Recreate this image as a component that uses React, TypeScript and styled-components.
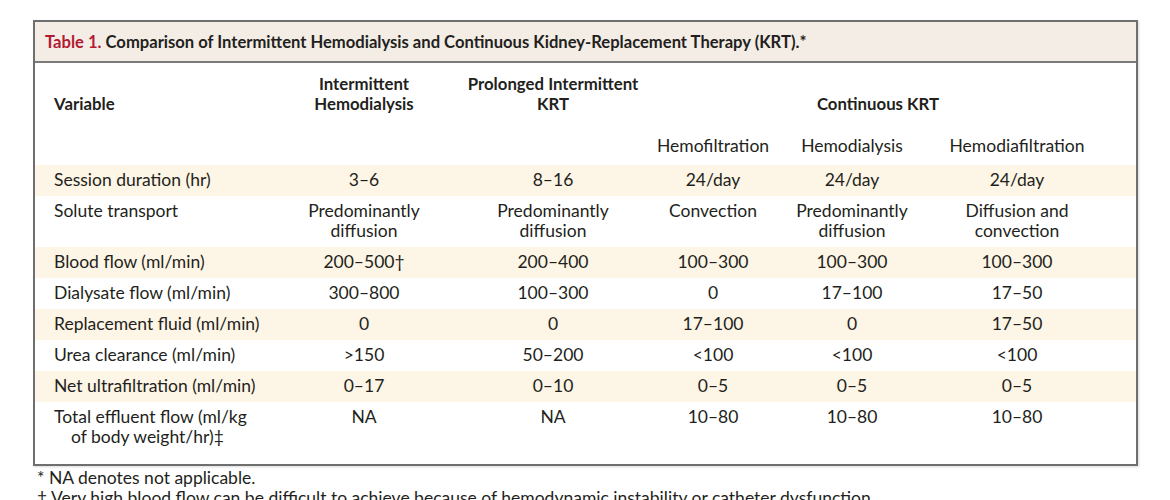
import React from "react";
import styled, { createGlobalStyle } from "styled-components";

const Global = createGlobalStyle`
  html, body { margin: 0; padding: 0; background: #ffffff; }
  body { font-family: Lato, "Open Sans", sans-serif; color: #231f20; }
`;

const COLS = "218px 184px 194px 126px 152px 178px";

const Page = styled.div`
  padding: 20px 32px 0 33px;
  width: 1105px;
`;

const Box = styled.div`
  border: 2px solid #6f6f6f;
  box-shadow: 1px 1px 2px rgba(0,0,0,0.15);
`;

const TitleBar = styled.div`
  background: #f4ede6;
  border-bottom: 2px solid #7a7a7a;
  height: 39px;
  display: flex;
  align-items: center;
  padding-left: 10px;
  font-weight: 700;
  font-size: 16.6px;
  color: #231f20;
  white-space: nowrap;
`;

const Red = styled.span`
  color: #b31b34;
  margin-right: 4px;
`;

const Grid = styled.div<{ $shade?: boolean; $pt?: number; $pb?: number; $align?: string }>`
  display: grid;
  grid-template-columns: ${COLS};
  padding: ${(p) => p.$pt ?? 5}px 0 ${(p) => p.$pb ?? 6}px 19px;
  background: ${(p) => (p.$shade ? "#fdf5e5" : "transparent")};
  align-items: ${(p) => p.$align ?? "start"};
  font-size: 17.5px;
  line-height: 20px;
`;

const Head = styled.div<{ $left?: boolean; $span?: number }>`
  font-weight: 700;
  font-size: 16.8px;
  text-align: ${(p) => (p.$left ? "left" : "center")};
  grid-column: span ${(p) => p.$span ?? 1};
  white-space: nowrap;
`;

const Sub = styled.div`
  text-align: center;
  font-weight: 400;
`;

const Label = styled.div<{ $hang?: boolean }>`
  text-align: left;
  white-space: nowrap;
  ${(p) => (p.$hang ? "padding-left: 17px; text-indent: -17px;" : "")}
`;

const Cell = styled.div`
  text-align: center;
  white-space: nowrap;
`;

const Notes = styled.div`
  padding: 2px 0 0 4px;
  font-size: 17.5px;
  line-height: 20px;
  color: #231f20;
  white-space: nowrap;
`;

type Row = { label: string; vals: string[]; hang?: boolean; pb?: number };

const rows: Row[] = [
  { label: "Session duration (hr)", vals: ["3–6", "8–16", "24/day", "24/day", "24/day"] },
  {
    label: "Solute transport",
    vals: [
      "Predominantly\ndiffusion",
      "Predominantly\ndiffusion",
      "Convection",
      "Predominantly\ndiffusion",
      "Diffusion and\nconvection",
    ],
  },
  { label: "Blood flow (ml/min)", vals: ["200–500†", "200–400", "100–300", "100–300", "100–300"] },
  { label: "Dialysate flow (ml/min)", vals: ["300–800", "100–300", "0", "17–100", "17–50"] },
  { label: "Replacement fluid (ml/min)", vals: ["0", "0", "17–100", "0", "17–50"] },
  { label: "Urea clearance (ml/min)", vals: [">150", "50–200", "<100", "<100", "<100"] },
  { label: "Net ultrafiltration (ml/min)", vals: ["0–17", "0–10", "0–5", "0–5", "0–5"] },
  {
    label: "Total effluent flow (ml/kg\nof body weight/hr)‡",
    vals: ["NA", "NA", "10–80", "10–80", "10–80"],
    hang: true,
    pb: 17,
  },
];

const Lines = ({ text }: { text: string }) => (
  <>
    {text.split("\n").map((t, i) => (
      <React.Fragment key={i}>
        {i > 0 && <br />}
        {t}
      </React.Fragment>
    ))}
  </>
);

export default function App() {
  return (
    <>
      <Global />
      <Page>
        <Box>
          <TitleBar>
            <Red>Table 1.</Red>
            Comparison of Intermittent Hemodialysis and Continuous Kidney-Replacement Therapy (KRT).*
          </TitleBar>
          <Grid $pt={11} $pb={0} $align="end">
            <Head $left>Variable</Head>
            <Head>
              Intermittent
              <br />
              Hemodialysis
            </Head>
            <Head>
              Prolonged Intermittent
              <br />
              KRT
            </Head>
            <Head $span={3}>Continuous KRT</Head>
          </Grid>
          <Grid $pt={22} $pb={9}>
            <div />
            <div />
            <div />
            <Sub>Hemofiltration</Sub>
            <Sub>Hemodialysis</Sub>
            <Sub>Hemodiafiltration</Sub>
          </Grid>
          {rows.map((r, i) => (
            <Grid key={r.label} $shade={i % 2 === 0} $pb={r.pb}>
              <Label $hang={r.hang}>
                <Lines text={r.label} />
              </Label>
              {r.vals.map((v, j) => (
                <Cell key={j}>
                  <Lines text={v} />
                </Cell>
              ))}
            </Grid>
          ))}
        </Box>
        <Notes>
          * NA denotes not applicable.
          <br />† Very high blood flow can be difficult to achieve because of hemodynamic instability or catheter dysfunction.
        </Notes>
      </Page>
    </>
  );
}
